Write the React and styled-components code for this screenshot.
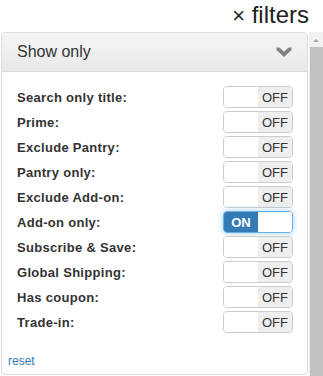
import React from 'react'
import styled, { createGlobalStyle } from 'styled-components'

const filters = [
  { label: 'Search only title:', on: false },
  { label: 'Prime:', on: false },
  { label: 'Exclude Pantry:', on: false },
  { label: 'Pantry only:', on: false },
  { label: 'Exclude Add-on:', on: false },
  { label: 'Add-on only:', on: true },
  { label: 'Subscribe & Save:', on: false },
  { label: 'Global Shipping:', on: false },
  { label: 'Has coupon:', on: false },
  { label: 'Trade-in:', on: false },
]

const App = () => {
  return (
    <>
      <GlobalStyle />
      <Page>
        <TopBar>
          <Close>×</Close> filters
        </TopBar>
        <Main>
          <Panel>
            <Heading>
              <span>Show only</span>
              <svg width="16" height="11" viewBox="0 0 16 11">
                <path d="M0.5 0.5 L3.5 0.5 L8 4.8 L12.5 0.5 L15.5 0.5 L15.5 3 L8 10 L0.5 3 Z" fill="#808080" />
              </svg>
            </Heading>
            <Body>
              <List>
                {filters.map((f) => (
                  <Row key={f.label}>
                    <Label>{f.label}</Label>
                    <Switch $on={f.on}>
                      {f.on ? (
                        <>
                          <Half $kind="on">ON</Half>
                          <Half />
                        </>
                      ) : (
                        <>
                          <Half />
                          <Half $kind="off">OFF</Half>
                        </>
                      )}
                    </Switch>
                  </Row>
                ))}
              </List>
              <Reset href="#">reset</Reset>
            </Body>
          </Panel>
          <Scrollbar>
            <svg width="14" height="15" viewBox="0 0 14 15">
              <path d="M4 10 L7 7 L10 10 Z" fill="#a3a3a3" />
            </svg>
            <Thumb />
          </Scrollbar>
        </Main>
      </Page>
    </>
  )
}

const GlobalStyle = createGlobalStyle`
  body {
    margin: 0;
    background: #fff;
    font-family: "Liberation Sans", Arial, sans-serif;
    color: #333;
  }
`;

const Page = styled.div`
  width: 323px;
  height: 376px;
  overflow: hidden;
  display: flex;
  flex-direction: column;
`;

const TopBar = styled.div`
  height: 32px;
  box-sizing: border-box;
  text-align: right;
  padding: 0 14px 0 0;
  font-size: 24px;
  line-height: 30px;
  color: #222;
`;

const Close = styled.span`
  font-size: 22px;
`;

const Main = styled.div`
  flex: 1;
  display: flex;
  align-items: flex-start;
  padding-left: 1px;
`;

const Panel = styled.div`
  width: 307px;
  height: 343px;
  box-sizing: border-box;
  border: 1px solid #ddd;
  border-radius: 4px;
  display: flex;
  flex-direction: column;
  overflow: hidden;
`;

const Heading = styled.div`
  height: 39px;
  box-sizing: border-box;
  display: flex;
  align-items: center;
  justify-content: space-between;
  padding: 0 15px 0 15px;
  background: linear-gradient(to bottom, #f5f5f5, #e8e8e8);
  border-bottom: 1px solid #ddd;
  font-size: 16px;
  color: #333;

  svg {
    margin-top: 1px;
  }
`;

const Body = styled.div`
  flex: 1;
  display: flex;
  flex-direction: column;
  justify-content: space-between;
  padding: 14px 14px 6px 6px;
`;

const List = styled.div`
  display: flex;
  flex-direction: column;
  gap: 3px;
  padding-left: 9px;
`;

const Row = styled.div`
  display: flex;
  align-items: center;
  justify-content: space-between;
  height: 22px;
`;

const Label = styled.span`
  font-size: 13px;
  font-weight: bold;
  color: #333;
  letter-spacing: 0.3px;
`;

const Switch = styled.div`
  width: 70px;
  height: 22px;
  box-sizing: border-box;
  display: flex;
  border: 1px solid ${(p) => (p.$on ? '#66afe9' : '#ccc')};
  border-radius: 4px;
  overflow: hidden;
  box-shadow: ${(p) => (p.$on ? '0 0 6px rgba(102,175,233,0.6)' : 'none')};
`;

const Half = styled.span`
  flex: 1;
  display: flex;
  align-items: center;
  justify-content: center;
  font-size: 13px;
  font-weight: ${(p) => (p.$kind === 'on' ? 'bold' : 'normal')};
  background: ${(p) => (p.$kind === 'on' ? '#337ab7' : p.$kind === 'off' ? '#eee' : '#fff')};
  color: ${(p) => (p.$kind === 'on' ? '#fff' : '#333')};
`;

const Reset = styled.a`
  font-size: 12px;
  color: #337ab7;
  text-decoration: none;
  line-height: 14px;
`;

const Scrollbar = styled.div`
  width: 14px;
  margin-left: 1px;
  align-self: stretch;
  display: flex;
  flex-direction: column;
  background: #f1f1f1;
`;

const Thumb = styled.div`
  flex: 1;
  margin-left: 1px;
  background: #c1c1c1;
`;

export default App
